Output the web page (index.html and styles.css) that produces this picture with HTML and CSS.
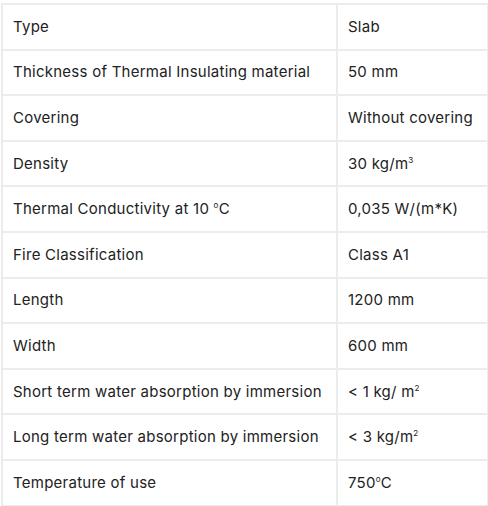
FILE: index.html
```html
<!DOCTYPE html>
<html>
<head>
<meta charset="utf-8">
<link rel="stylesheet" href="styles.css">
</head>
<body>
<div class="wrap">
<table class="spec">
  <tr><td class="k">Type</td><td class="v">Slab</td></tr>
  <tr><td class="k">Thickness of Thermal Insulating material</td><td class="v">50 mm</td></tr>
  <tr><td class="k">Covering</td><td class="v">Without covering</td></tr>
  <tr><td class="k">Density</td><td class="v">30 kg/m<sup>3</sup></td></tr>
  <tr><td class="k">Thermal Conductivity at 10 <sup>o</sup>C</td><td class="v">0,035 W/(m*K)</td></tr>
  <tr><td class="k">Fire Classification</td><td class="v">Class A1</td></tr>
  <tr><td class="k">Length</td><td class="v">1200 mm</td></tr>
  <tr><td class="k">Width</td><td class="v">600 mm</td></tr>
  <tr><td class="k">Short term water absorption by immersion</td><td class="v">&lt; 1 kg/ m<sup>2</sup></td></tr>
  <tr><td class="k">Long term water absorption by immersion</td><td class="v">&lt; 3 kg/m<sup>2</sup></td></tr>
  <tr><td class="k">Temperature of use</td><td class="v">750<sup>o</sup>C</td></tr>
</table>
</div>
</body>
</html>
```
FILE: styles.css
```css
html, body { margin: 0; padding: 0; background: #fff; }
.wrap { padding: 3px 1px 0 1px; }
.spec {
  border-collapse: collapse;
  width: 486px;
  font-family: "Inter", "Liberation Sans", sans-serif;
  font-size: 15px;
  letter-spacing: 0.25px;
  color: #222;
  table-layout: fixed;
}
.spec td {
  border: 2px solid #ececec;
  height: 45.6px;
  padding: 0 0 0 10px;
  box-sizing: border-box;
  vertical-align: middle;
  white-space: nowrap;
  line-height: 20px;
}
.spec td.k { width: 335px; }
.spec td.v { width: 151px; }
.spec sup { font-size: 8px; line-height: 0; vertical-align: 6px; }
```
